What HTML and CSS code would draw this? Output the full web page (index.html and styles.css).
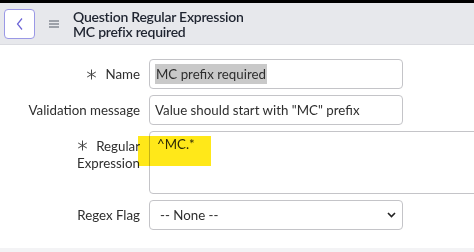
FILE: index.html
```html
<!DOCTYPE html>
<html lang="en">
<head>
    <meta charset="UTF-8" />
    <title>Question Regular Expression</title>
    <link rel="stylesheet" href="styles.css">
</head>
<body>
    <div class="topbar"></div>

    <header class="header">
        <button class="back-btn" type="button">
            <svg width="10" height="14" viewBox="0 0 10 14"><path d="M7 1.5 L2.5 7 L7 12.5" fill="none" stroke="#6b63d6" stroke-width="1.2"/></svg>
        </button>
        <span class="menu-icon">
            <svg width="10" height="8" viewBox="0 0 10 8"><path d="M0 1h10M0 4h10M0 7h10" stroke="#555a66" stroke-width="1.2"/></svg>
        </span>
        <div class="title">
            <div>Question Regular Expression</div>
            <div>MC prefix required</div>
        </div>
    </header>

    <form class="form">
        <label class="field-label" for="name">
            <svg class="req" width="11" height="11" viewBox="0 0 11 11"><path d="M5.5 0.5v10M1.2 3l8.6 5M1.2 8l8.6-5" stroke="#444" stroke-width="1"/></svg>Name
        </label>
        <div class="input"><span class="selected">MC prefix required</span></div>

        <label class="field-label" for="msg">Validation message</label>
        <div class="input">Value should start with "MC" prefix</div>

        <label class="field-label two-line" for="regex">
            <span><svg class="req" width="11" height="11" viewBox="0 0 11 11"><path d="M5.5 0.5v10M1.2 3l8.6 5M1.2 8l8.6-5" stroke="#444" stroke-width="1"/></svg>Regular</span>
            <span>Expression</span>
        </label>
        <div class="textarea-wrap">
            <div class="textarea">^MC.*</div>
            <div class="highlight"></div>
        </div>

        <label class="field-label" for="flag">Regex Flag</label>
        <div class="input select">
            <span>-- None --</span>
            <svg width="9" height="6" viewBox="0 0 9 6"><path d="M1 1 L4.5 4.5 L8 1" fill="none" stroke="#222" stroke-width="1.6"/></svg>
        </div>
    </form>

    <div class="bottom-strip"></div>
</body>
</html>
```

FILE: styles.css
```css
body {
    margin: 0;
    font-family: Lato, "Noto Sans", sans-serif;
    background-color: white;
    color: #2e2e2e;
    overflow: hidden;
    height: 252px;
    position: relative;
}

.topbar {
    height: 3px;
    background-color: #000;
}

.header {
    height: 41px;
    background-color: #e7e8ec;
    border-bottom: 1px solid #dadbe0;
    display: flex;
    align-items: center;
    padding-left: 4px;
}

.back-btn {
    width: 31px;
    height: 30px;
    border: 1px solid #9a98e6;
    border-radius: 4px;
    background-color: white;
    display: flex;
    align-items: center;
    justify-content: center;
    padding: 0;
}

.menu-icon {
    margin-left: 14px;
    display: flex;
}

.title {
    margin-left: 14px;
    font-size: 14px;
    line-height: 15px;
    font-weight: 600;
    letter-spacing: -0.25px;
    color: #1f2430;
}

.form {
    display: grid;
    grid-template-columns: 140px auto;
    column-gap: 9px;
    row-gap: 6px;
    padding-top: 14px;
    font-size: 13.3px;
}

.field-label {
    display: flex;
    align-items: center;
    justify-content: flex-end;
    text-align: right;
    color: #2e2e2e;
}

.req {
    margin-right: 8px;
}

.two-line {
    flex-direction: column;
    align-items: flex-end;
    justify-content: flex-start;
    padding-top: 7px;
    line-height: 17px;
}

.input {
    width: 242px;
    height: 28px;
    border: 1px solid #c4c4c8;
    border-radius: 4px;
    padding: 0 5px;
    display: flex;
    align-items: center;
}

.selected {
    background-color: #c9c9c9;
    padding: 2px 1px;
}

.textarea-wrap {
    position: relative;
}

.textarea {
    width: 340px;
    height: 53px;
    border: 1px solid #c4c4c8;
    border-radius: 4px;
    padding: 4px 7px;
}

.highlight {
    position: absolute;
    left: -11px;
    top: 5px;
    width: 73px;
    height: 30px;
    background-color: rgba(255, 230, 0, 0.9);
    mix-blend-mode: multiply;
}

.select {
    justify-content: space-between;
    padding: 0 6px 0 10px;
    width: 236px;
}

.bottom-strip {
    position: absolute;
    left: 0;
    right: 0;
    bottom: 0;
    height: 4px;
    background-color: #f3f3f5;
}
```
